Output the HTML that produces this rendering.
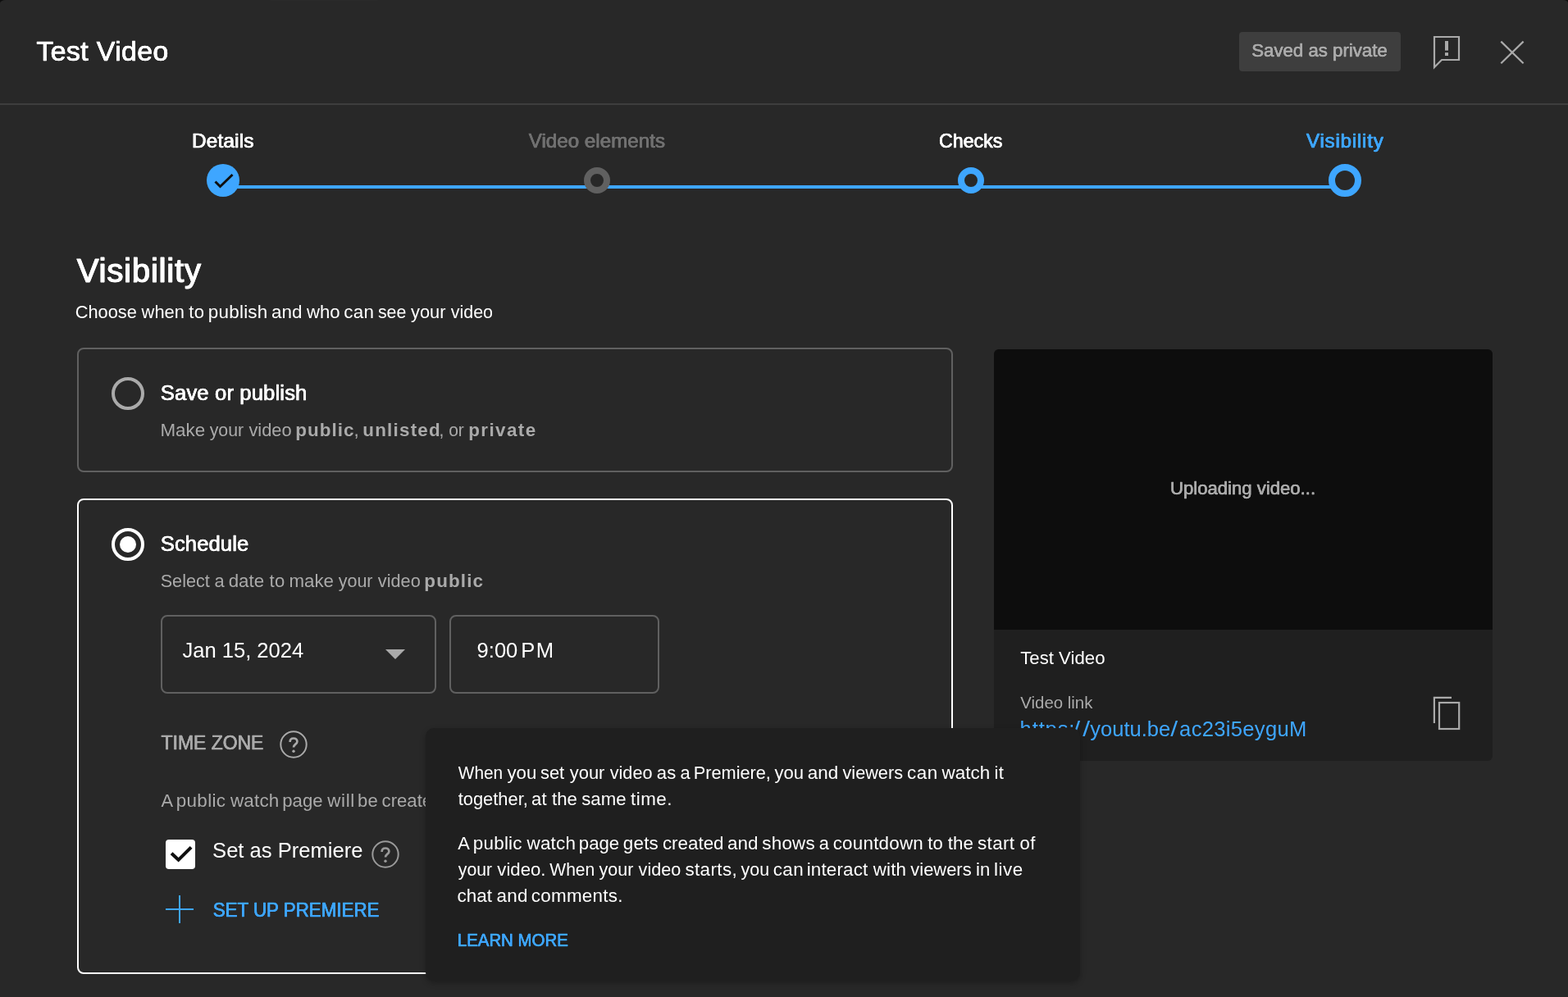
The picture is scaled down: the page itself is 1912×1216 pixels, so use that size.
<!DOCTYPE html>
<html lang="en">
<head>
<meta charset="utf-8">
<title>Test Video</title>
<style>
html,body{margin:0;padding:0;background:#0f0f0f;}
body{width:1912px;height:1216px;position:relative;overflow:hidden;font-family:"Liberation Sans",sans-serif;-webkit-font-smoothing:antialiased;}
.dialog{position:absolute;left:0;top:0;width:1912px;height:1216px;background:#282828;border-radius:7px 6px 0 0 / 4px 3.5px 0 0;}
.layer{position:absolute;left:0;top:0;width:1912px;height:1216px;will-change:transform;}
.abs,.t,svg{position:absolute;}
.t{white-space:nowrap;line-height:1;margin:0;padding:0;font-weight:400;transform-origin:0 0;}
.grp{margin:0;padding:0;height:0;font-size:0;line-height:0;}
.hline{left:0;top:126px;width:1912px;height:2px;background:#3e3e3e;}
.badge{left:1511px;top:39px;width:197px;height:48px;background:#3e3e3e;border-radius:4px;}
.stepline{left:272px;top:226px;width:1368px;height:4px;background:#3ea6ff;}
.dot{border-radius:50%;box-sizing:border-box;background:#282828;}
.card{box-sizing:border-box;border:2px solid #606060;border-radius:8px;}
.radio{box-sizing:border-box;width:40px;height:40px;border-radius:50%;border:4px solid #aaaaaa;}
.field{box-sizing:border-box;border:2px solid #606060;border-radius:8px;height:96px;top:750px;}
.panel{left:1212px;top:426px;width:608px;height:502px;background:#1f1f1f;border-radius:6px;overflow:hidden;}
.video{left:0;top:0;width:608px;height:342px;background:#0d0d0d;}
.tip{left:519px;top:888px;width:798px;height:308px;background:#1f1f1f;border-radius:10px;box-shadow:0 3px 7px rgba(0,0,0,.28);z-index:4;}
#title{left:44.4px;top:46px;font-size:33.8px;color:#ffffff;letter-spacing:0.402px;-webkit-text-stroke:0.51px #ffffff;text-shadow:0.34px 0 0 #ffffff,-0.34px 0 0 #ffffff;}
#saved{left:1526px;top:51px;font-size:22.4px;color:#aaaaaa;-webkit-text-stroke:0.34px #aaaaaa;text-shadow:0.22px 0 0 #aaaaaa,-0.22px 0 0 #aaaaaa;transform:translateX(0.2px) scaleX(0.9927);}
#s1{left:234.0px;top:160px;font-size:24.3px;color:#ffffff;letter-spacing:0.200px;-webkit-text-stroke:0.47px #ffffff;text-shadow:0.32px 0 0 #ffffff,-0.32px 0 0 #ffffff;}
#s2{left:644px;top:160px;font-size:24.3px;color:#717171;-webkit-text-stroke:0.47px #717171;text-shadow:0.32px 0 0 #717171,-0.32px 0 0 #717171;transform:translateX(0.7px) scaleX(0.9956);}
#s3{left:1145px;top:160px;font-size:24.3px;color:#ffffff;-webkit-text-stroke:0.47px #ffffff;text-shadow:0.32px 0 0 #ffffff,-0.32px 0 0 #ffffff;transform:scaleX(0.9548);}
#s4{left:1592.9px;top:160px;font-size:24.3px;color:#3ea6ff;letter-spacing:0.731px;-webkit-text-stroke:0.47px #3ea6ff;text-shadow:0.32px 0 0 #3ea6ff,-0.32px 0 0 #3ea6ff;}
#h1{left:93.8px;top:310px;font-size:40px;color:#ffffff;letter-spacing:0.826px;-webkit-text-stroke:0.9px #ffffff;text-shadow:0.6px 0 0 #ffffff,-0.6px 0 0 #ffffff;}
#c1t{left:195.8px;top:467px;font-size:25.6px;color:#ffffff;letter-spacing:0.152px;-webkit-text-stroke:0.38px #ffffff;text-shadow:0.26px 0 0 #ffffff,-0.26px 0 0 #ffffff;}
#c1db{left:360.3px;top:514px;font-size:22.4px;color:#aaaaaa;letter-spacing:1.033px;font-weight:700;}
#c1dc{left:431.6px;top:514px;font-size:22.4px;color:#aaaaaa;}
#c1dd{left:442.3px;top:514px;font-size:22.4px;color:#aaaaaa;letter-spacing:1.225px;font-weight:700;}
#c1de{left:535px;top:514px;font-size:22.4px;color:#aaaaaa;transform:translateX(0.5px) scaleX(0.9376);}
#c1df{left:571.2px;top:514px;font-size:22.4px;color:#aaaaaa;letter-spacing:1.432px;font-weight:700;}
#c2t{left:195.8px;top:651px;font-size:25.6px;color:#ffffff;letter-spacing:0.099px;-webkit-text-stroke:0.38px #ffffff;text-shadow:0.26px 0 0 #ffffff,-0.26px 0 0 #ffffff;}
#c2db{left:517.3px;top:698px;font-size:22.4px;color:#aaaaaa;letter-spacing:1.168px;font-weight:700;}
#date{left:222px;top:781px;font-size:25.6px;color:#ffffff;transform:translateX(0.4px) scaleX(0.9990);}
#timea{left:581px;top:781px;font-size:25.6px;color:#ffffff;transform:translateX(0.6px) scaleX(0.9981);}
#timeb{left:635.2px;top:781px;font-size:25.6px;color:#ffffff;letter-spacing:1.586px;}
#tz{left:196px;top:894px;font-size:24.8px;color:#aaaaaa;-webkit-text-stroke:0.48px #aaaaaa;text-shadow:0.32px 0 0 #aaaaaa,-0.32px 0 0 #aaaaaa;transform:translateX(0.6px) scaleX(0.9238);}
#prem{left:259px;top:1025px;font-size:25.6px;color:#ffffff;transform:translateX(0.1px) scaleX(0.9990);}
#setup{left:259px;top:1098px;font-size:24.8px;color:#3ea6ff;-webkit-text-stroke:0.48px #3ea6ff;text-shadow:0.32px 0 0 #3ea6ff,-0.32px 0 0 #3ea6ff;transform:translateX(0.7px) scaleX(0.9009);}
#upl{left:1427px;top:585px;font-size:22.4px;color:#aaaaaa;-webkit-text-stroke:0.34px #aaaaaa;text-shadow:0.22px 0 0 #aaaaaa,-0.22px 0 0 #aaaaaa;transform:scaleX(0.9879);}
#pt{left:1244px;top:792px;font-size:22.4px;color:#ffffff;transform:translateX(0.2px) scaleX(0.9921);}
#vl{left:1244px;top:847px;font-size:20.8px;color:#aaaaaa;transform:translateX(0.3px) scaleX(0.9813);}
#linka{left:1243.6px;top:877px;font-size:25.6px;color:#3ea6ff;letter-spacing:0.845px;}
#linkb{left:1308px;top:877px;font-size:25.6px;color:#3ea6ff;letter-spacing:2.469px;transform:translateX(0.2px) scaleX(1.2500);}
#linkd{left:1329px;top:877px;font-size:25.6px;color:#3ea6ff;transform:translateX(0.3px) scaleX(0.9971);}
#linke{left:1427px;top:877px;font-size:25.6px;color:#3ea6ff;transform:translateX(0.2px) scaleX(1.2500);}
#linkc{left:1438.1px;top:877px;font-size:25.6px;color:#3ea6ff;letter-spacing:0.300px;}
#lm{left:557px;top:1136px;font-size:22.2px;color:#3ea6ff;-webkit-text-stroke:0.4px #3ea6ff;text-shadow:0.27px 0 0 #3ea6ff,-0.27px 0 0 #3ea6ff;z-index:5;transform:translateX(0.8px) scaleX(0.9199);}
#sub0{left:91px;top:370px;font-size:22.4px;color:#ffffff;transform:translateX(0.7px) scaleX(0.9731);}
#sub1{left:172px;top:370px;font-size:22.4px;color:#ffffff;transform:translateX(0.6px) scaleX(0.9769);}
#sub2{left:230px;top:370px;font-size:22.4px;color:#ffffff;letter-spacing:0.300px;transform:translateX(0.3px) scaleX(0.9850);}
#sub3{left:253.8px;top:370px;font-size:22.4px;color:#ffffff;letter-spacing:0.252px;}
#sub4{left:330.9px;top:370px;font-size:22.4px;color:#ffffff;letter-spacing:0.124px;}
#sub5{left:374px;top:370px;font-size:22.4px;color:#ffffff;transform:scaleX(0.9874);}
#sub6{left:419.3px;top:370px;font-size:22.4px;color:#ffffff;letter-spacing:0.327px;}
#sub7{left:460px;top:370px;font-size:22.4px;color:#ffffff;transform:translateX(0.9px) scaleX(0.9518);}
#sub8{left:501px;top:370px;font-size:22.4px;color:#ffffff;transform:scaleX(0.9730);}
#sub9{left:549px;top:370px;font-size:22.4px;color:#ffffff;transform:translateX(0.7px) scaleX(0.9594);}
#c1da0{left:195px;top:514px;font-size:22.4px;color:#aaaaaa;transform:translateX(0.4px) scaleX(0.9992);}
#c1da1{left:255px;top:514px;font-size:22.4px;color:#aaaaaa;transform:translateX(0.7px) scaleX(0.9508);}
#c1da2{left:303px;top:514px;font-size:22.4px;color:#aaaaaa;transform:translateX(0.4px) scaleX(0.9770);}
#c2da0{left:195px;top:698px;font-size:22.4px;color:#aaaaaa;transform:translateX(0.7px) scaleX(0.9658);}
#c2da1{left:261px;top:698px;font-size:22.4px;color:#aaaaaa;transform:translateX(0.5px) scaleX(0.9750);}
#c2da2{left:278px;top:698px;font-size:22.4px;color:#aaaaaa;transform:translateX(0.7px) scaleX(0.9955);}
#c2da3{left:328px;top:698px;font-size:22.4px;color:#aaaaaa;letter-spacing:0.300px;transform:translateX(0.5px) scaleX(0.9850);}
#c2da4{left:352px;top:698px;font-size:22.4px;color:#aaaaaa;transform:translateX(0.4px) scaleX(0.9965);}
#c2da5{left:412px;top:698px;font-size:22.4px;color:#aaaaaa;transform:translateX(0.7px) scaleX(0.9602);}
#c2da6{left:460px;top:698px;font-size:22.4px;color:#aaaaaa;transform:translateX(0.8px) scaleX(0.9711);}
#pw0{left:196px;top:966px;font-size:22.4px;color:#aaaaaa;transform:translateX(0.4px) scaleX(0.9750);}
#pw1{left:214.8px;top:966px;font-size:22.4px;color:#aaaaaa;letter-spacing:0.324px;}
#pw2{left:281.0px;top:966px;font-size:22.4px;color:#aaaaaa;letter-spacing:0.180px;}
#pw3{left:344px;top:966px;font-size:22.4px;color:#aaaaaa;transform:translateX(0.3px) scaleX(0.9886);}
#pw4{left:399.3px;top:966px;font-size:22.4px;color:#aaaaaa;letter-spacing:0.632px;}
#pw5{left:435px;top:966px;font-size:22.4px;color:#aaaaaa;letter-spacing:0.300px;transform:translateX(0.9px) scaleX(0.9850);}
#pw6{left:465px;top:966px;font-size:22.4px;color:#aaaaaa;transform:translateX(0.6px) scaleX(0.9880);}
#tt10{left:558px;top:932px;font-size:22.4px;color:#ffffff;z-index:5;transform:translateX(0.8px) scaleX(0.9286);}
#tt11{left:618px;top:932px;font-size:22.4px;color:#ffffff;z-index:5;transform:translateX(0.5px) scaleX(0.9898);}
#tt12{left:659px;top:932px;font-size:22.4px;color:#ffffff;z-index:5;transform:scaleX(0.9773);}
#tt13{left:694px;top:932px;font-size:22.4px;color:#ffffff;z-index:5;transform:translateX(0.8px) scaleX(0.9779);}
#tt14{left:743px;top:932px;font-size:22.4px;color:#ffffff;z-index:5;transform:translateX(0.7px) scaleX(0.9674);}
#tt15{left:800px;top:932px;font-size:22.4px;color:#ffffff;letter-spacing:0.300px;z-index:5;transform:translateX(0.7px) scaleX(0.9850);}
#tt16{left:829px;top:932px;font-size:22.4px;color:#ffffff;z-index:5;transform:translateX(0.6px) scaleX(0.9750);}
#tt17{left:845px;top:932px;font-size:22.4px;color:#ffffff;z-index:5;transform:translateX(0.7px) scaleX(0.9707);}
#tt18{left:944px;top:932px;font-size:22.4px;color:#ffffff;z-index:5;transform:translateX(0.6px) scaleX(0.9840);}
#tt19{left:984.7px;top:932px;font-size:22.4px;color:#ffffff;letter-spacing:0.107px;z-index:5;}
#tt110{left:1027px;top:932px;font-size:22.4px;color:#ffffff;z-index:5;transform:translateX(0.5px) scaleX(0.9683);}
#tt111{left:1106.1px;top:932px;font-size:22.4px;color:#ffffff;letter-spacing:0.468px;z-index:5;}
#tt112{left:1148.4px;top:932px;font-size:22.4px;color:#ffffff;letter-spacing:0.110px;z-index:5;}
#tt113{left:1212px;top:932px;font-size:22.4px;color:#ffffff;letter-spacing:0.300px;z-index:5;transform:translateX(0.6px) scaleX(0.9850);}
#tt20{left:558px;top:964px;font-size:22.4px;color:#ffffff;z-index:5;transform:translateX(0.7px) scaleX(0.9765);}
#tt21{left:647px;top:964px;font-size:22.4px;color:#ffffff;letter-spacing:0.300px;z-index:5;transform:translateX(0.9px) scaleX(0.9850);}
#tt22{left:673px;top:964px;font-size:22.4px;color:#ffffff;z-index:5;transform:scaleX(0.9895);}
#tt23{left:709px;top:964px;font-size:22.4px;color:#ffffff;z-index:5;transform:translateX(0.2px) scaleX(0.9925);}
#tt24{left:769.1px;top:964px;font-size:22.4px;color:#ffffff;letter-spacing:0.454px;z-index:5;}
#tt30{left:558px;top:1018px;font-size:22.4px;color:#ffffff;z-index:5;transform:translateX(0.3px) scaleX(0.9750);}
#tt31{left:576.8px;top:1018px;font-size:22.4px;color:#ffffff;letter-spacing:0.245px;z-index:5;}
#tt32{left:642.6px;top:1018px;font-size:22.4px;color:#ffffff;letter-spacing:0.191px;z-index:5;}
#tt33{left:705px;top:1018px;font-size:22.4px;color:#ffffff;z-index:5;transform:translateX(0.8px) scaleX(0.9907);}
#tt34{left:759.8px;top:1018px;font-size:22.4px;color:#ffffff;letter-spacing:0.218px;z-index:5;}
#tt35{left:807px;top:1018px;font-size:22.4px;color:#ffffff;z-index:5;transform:translateX(0.9px) scaleX(0.9991);}
#tt36{left:887.0px;top:1018px;font-size:22.4px;color:#ffffff;letter-spacing:0.076px;z-index:5;}
#tt37{left:929.3px;top:1018px;font-size:22.4px;color:#ffffff;letter-spacing:0.235px;z-index:5;}
#tt38{left:998px;top:1018px;font-size:22.4px;color:#ffffff;z-index:5;transform:translateX(0.8px) scaleX(0.9750);}
#tt39{left:1015.7px;top:1018px;font-size:22.4px;color:#ffffff;letter-spacing:0.223px;z-index:5;}
#tt310{left:1131px;top:1018px;font-size:22.4px;color:#ffffff;letter-spacing:0.300px;z-index:5;transform:translateX(0.2px) scaleX(0.9850);}
#tt311{left:1155px;top:1018px;font-size:22.4px;color:#ffffff;z-index:5;transform:translateX(0.8px) scaleX(0.9974);}
#tt312{left:1192.0px;top:1018px;font-size:22.4px;color:#ffffff;letter-spacing:0.369px;z-index:5;}
#tt313{left:1243px;top:1018px;font-size:22.4px;color:#ffffff;letter-spacing:0.300px;z-index:5;transform:translateX(0.6px) scaleX(0.9850);}
#tt40{left:558px;top:1050px;font-size:22.4px;color:#ffffff;z-index:5;transform:translateX(0.8px) scaleX(0.9462);}
#tt41{left:606px;top:1050px;font-size:22.4px;color:#ffffff;z-index:5;transform:translateX(0.3px) scaleX(0.9901);}
#tt42{left:670px;top:1050px;font-size:22.4px;color:#ffffff;z-index:5;transform:translateX(0.3px) scaleX(0.9392);}
#tt43{left:730px;top:1050px;font-size:22.4px;color:#ffffff;z-index:5;transform:translateX(0.6px) scaleX(0.9573);}
#tt44{left:778px;top:1050px;font-size:22.4px;color:#ffffff;z-index:5;transform:translateX(0.6px) scaleX(0.9652);}
#tt45{left:835.4px;top:1050px;font-size:22.4px;color:#ffffff;letter-spacing:0.408px;z-index:5;}
#tt46{left:903px;top:1050px;font-size:22.4px;color:#ffffff;z-index:5;transform:translateX(0.6px) scaleX(0.9559);}
#tt47{left:942.7px;top:1050px;font-size:22.4px;color:#ffffff;letter-spacing:0.456px;z-index:5;}
#tt48{left:983.7px;top:1050px;font-size:22.4px;color:#ffffff;letter-spacing:0.159px;z-index:5;}
#tt49{left:1064.7px;top:1050px;font-size:22.4px;color:#ffffff;letter-spacing:0.174px;z-index:5;}
#tt410{left:1110px;top:1050px;font-size:22.4px;color:#ffffff;z-index:5;transform:translateX(0.3px) scaleX(0.9795);}
#tt411{left:1189px;top:1050px;font-size:22.4px;color:#ffffff;letter-spacing:0.300px;z-index:5;transform:translateX(0.9px) scaleX(0.9850);}
#tt412{left:1212.0px;top:1050px;font-size:22.4px;color:#ffffff;letter-spacing:0.512px;z-index:5;}
#tt50{left:557.5px;top:1082px;font-size:22.4px;color:#ffffff;letter-spacing:0.012px;z-index:5;}
#tt51{left:605.6px;top:1082px;font-size:22.4px;color:#ffffff;letter-spacing:0.305px;z-index:5;}
#tt52{left:647.8px;top:1082px;font-size:22.4px;color:#ffffff;letter-spacing:0.261px;z-index:5;}

</style>
</head>
<body>
<div class="dialog"></div>
<div class="layer">

<header>
  <h1 class="t" id="title">Test Video</h1>
  <div class="abs badge"></div>
  <span class="t" id="saved">Saved as private</span>
  <svg style="left:1744px;top:40px" width="48" height="48" viewBox="0 0 48 48" fill="none" stroke="#aaaaaa" stroke-width="2.2">
    <path d="M5 5 H35 V33 H14 L5 42 Z" stroke-linejoin="miter"/>
    <rect x="18" y="10" width="4" height="11.6" fill="#aaaaaa" stroke="none"/>
    <rect x="18" y="24.1" width="4" height="3.9" fill="#aaaaaa" stroke="none"/>
  </svg>
  <svg style="left:1824px;top:44px" width="40" height="40" viewBox="0 0 40 40" fill="none" stroke="#aaaaaa" stroke-width="2.2">
    <path d="M6.3 6.6 L33.6 33.2 M33.6 6.6 L6.3 33.2"/>
  </svg>
  <div class="abs hline"></div>
  <div class="abs" style="left:330px;top:0;width:130px;height:1px;background:#2b2b2b;"></div>
</header>

<nav>
  <span class="t" id="s1">Details</span>
  <span class="t" id="s2">Video elements</span>
  <span class="t" id="s3">Checks</span>
  <span class="t" id="s4">Visibility</span>
  <div class="abs stepline"></div>
  <div class="abs dot" style="left:252px;top:200px;width:40px;height:40px;background:#3ea6ff;"></div>
  <svg style="left:252px;top:200px" width="40" height="40" viewBox="0 0 40 40" fill="none" stroke="#0f0f0f" stroke-width="3">
    <path d="M10.5 21.5 L16.5 27.5 L31.5 13"/>
  </svg>
  <div class="abs dot" style="left:712px;top:204px;width:32px;height:32px;border:8px solid #606060;"></div>
  <div class="abs dot" style="left:1168px;top:204px;width:32px;height:32px;border:8px solid #3ea6ff;"></div>
  <div class="abs dot" style="left:1620px;top:200px;width:40px;height:40px;border:8px solid #3ea6ff;"></div>
</nav>

<main>
  <h2 class="t" id="h1">Visibility</h2>
  <p class="grp"><span class="t" id="sub0">Choose</span> <span class="t" id="sub1">when</span> <span class="t" id="sub2">to</span> <span class="t" id="sub3">publish</span> <span class="t" id="sub4">and</span> <span class="t" id="sub5">who</span> <span class="t" id="sub6">can</span> <span class="t" id="sub7">see</span> <span class="t" id="sub8">your</span> <span class="t" id="sub9">video</span></p>

  <section class="abs card" style="left:94px;top:424px;width:1068px;height:152px;"></section>
  <div class="abs radio" style="left:136px;top:460px;"></div>
  <span class="t" id="c1t">Save or publish</span>
  <p class="grp"><span class="t" id="c1da0">Make</span> <span class="t" id="c1da1">your</span> <span class="t" id="c1da2">video</span> <b class="t" id="c1db">public</b><span class="t" id="c1dc">,</span> <b class="t" id="c1dd">unlisted</b><span class="t" id="c1de">, or</span> <b class="t" id="c1df">private</b></p>

  <section class="abs card" style="left:94px;top:608px;width:1068px;height:580px;border-color:#ffffff;"></section>
  <div class="abs radio" style="left:136px;top:644px;border-color:#ffffff;"></div>
  <div class="abs" style="left:146px;top:654px;width:20px;height:20px;border-radius:50%;background:#ffffff;"></div>
  <span class="t" id="c2t">Schedule</span>
  <p class="grp"><span class="t" id="c2da0">Select</span> <span class="t" id="c2da1">a</span> <span class="t" id="c2da2">date</span> <span class="t" id="c2da3">to</span> <span class="t" id="c2da4">make</span> <span class="t" id="c2da5">your</span> <span class="t" id="c2da6">video</span> <b class="t" id="c2db">public</b></p>

  <div class="abs field" style="left:196px;width:336px;"></div>
  <span class="t" id="date">Jan 15, 2024</span>
  <svg style="left:470px;top:792px" width="24" height="12" viewBox="0 0 24 12"><path d="M0 0 H24 L12 12 Z" fill="#aaaaaa"/></svg>
  <div class="abs field" style="left:548px;width:256px;"></div>
  <span class="grp"><span class="t" id="timea">9:00</span> <span class="t" id="timeb">PM</span></span>

  <span class="t" id="tz">TIME ZONE</span>
  <svg style="left:340px;top:890px" width="36" height="36" viewBox="0 0 36 36" fill="none" stroke="#aaaaaa" stroke-width="2">
    <circle cx="18" cy="18" r="15.7"/>
    <path d="M13.6 14.9 C13.6 12.1 15.5 10.5 18 10.5 C20.5 10.5 22.4 12.1 22.4 14.5 C22.4 17.5 18 17.9 18 21.5" stroke-width="2.7"/>
    <circle cx="18" cy="26.2" r="1.7" fill="#aaaaaa" stroke="none"/>
  </svg>
  <p class="grp"><span class="t" id="pw0">A</span> <span class="t" id="pw1">public</span> <span class="t" id="pw2">watch</span> <span class="t" id="pw3">page</span> <span class="t" id="pw4">will</span> <span class="t" id="pw5">be</span> <span class="t" id="pw6">created</span></p>

  <div class="abs" style="left:202px;top:1024px;width:36px;height:36px;background:#ffffff;border-radius:4px;"></div>
  <svg style="left:202px;top:1024px" width="36" height="36" viewBox="0 0 36 36" fill="none" stroke="#0f0f0f" stroke-width="4">
    <path d="M7.1 16.8 L15.6 24.8 L31.1 9.3"/>
  </svg>
  <span class="t" id="prem">Set as Premiere</span>
  <svg style="left:452px;top:1024px" width="36" height="36" viewBox="0 0 36 36" fill="none" stroke="#9a9a9a" stroke-width="2">
    <circle cx="18" cy="18" r="15.7"/>
    <path d="M13.6 14.9 C13.6 12.1 15.5 10.5 18 10.5 C20.5 10.5 22.4 12.1 22.4 14.5 C22.4 17.5 18 17.9 18 21.5" stroke-width="2.7"/>
    <circle cx="18" cy="26.2" r="1.7" fill="#9a9a9a" stroke="none"/>
  </svg>

  <svg style="left:201px;top:1091px" width="36" height="36" viewBox="0 0 36 36" fill="none" stroke="#3ea6ff" stroke-width="2">
    <path d="M18 1 V35 M1 18 H35"/>
  </svg>
  <span class="t" id="setup">SET UP PREMIERE</span>
</main>

<aside>
  <div class="abs panel"><div class="abs video"></div></div>
  <span class="t" id="upl">Uploading video...</span>
  <span class="t" id="pt">Test Video</span>
  <span class="t" id="vl">Video link</span>
  <a class="grp"><span class="t" id="linka">https:</span><span class="t" id="linkb">//</span><span class="t" id="linkd">youtu.be</span><span class="t" id="linke">/</span><span class="t" id="linkc">ac23i5eyguM</span></a>
  <svg style="left:1744px;top:846px" width="40" height="48" viewBox="0 0 40 48" fill="none" stroke="#aaaaaa" stroke-width="2.2">
    <path d="M4.9 36 V4.9 H26"/>
    <rect x="11" y="11" width="24.2" height="32"/>
  </svg>
</aside>

<div class="abs tip" role="tooltip"></div>
<p class="grp"><span class="t" id="tt10">When</span> <span class="t" id="tt11">you</span> <span class="t" id="tt12">set</span> <span class="t" id="tt13">your</span> <span class="t" id="tt14">video</span> <span class="t" id="tt15">as</span> <span class="t" id="tt16">a</span> <span class="t" id="tt17">Premiere,</span> <span class="t" id="tt18">you</span> <span class="t" id="tt19">and</span> <span class="t" id="tt110">viewers</span> <span class="t" id="tt111">can</span> <span class="t" id="tt112">watch</span> <span class="t" id="tt113">it</span></p>
<p class="grp"><span class="t" id="tt20">together,</span> <span class="t" id="tt21">at</span> <span class="t" id="tt22">the</span> <span class="t" id="tt23">same</span> <span class="t" id="tt24">time.</span></p>
<p class="grp"><span class="t" id="tt30">A</span> <span class="t" id="tt31">public</span> <span class="t" id="tt32">watch</span> <span class="t" id="tt33">page</span> <span class="t" id="tt34">gets</span> <span class="t" id="tt35">created</span> <span class="t" id="tt36">and</span> <span class="t" id="tt37">shows</span> <span class="t" id="tt38">a</span> <span class="t" id="tt39">countdown</span> <span class="t" id="tt310">to</span> <span class="t" id="tt311">the</span> <span class="t" id="tt312">start</span> <span class="t" id="tt313">of</span></p>
<p class="grp"><span class="t" id="tt40">your</span> <span class="t" id="tt41">video.</span> <span class="t" id="tt42">When</span> <span class="t" id="tt43">your</span> <span class="t" id="tt44">video</span> <span class="t" id="tt45">starts,</span> <span class="t" id="tt46">you</span> <span class="t" id="tt47">can</span> <span class="t" id="tt48">interact</span> <span class="t" id="tt49">with</span> <span class="t" id="tt410">viewers</span> <span class="t" id="tt411">in</span> <span class="t" id="tt412">live</span></p>
<p class="grp"><span class="t" id="tt50">chat</span> <span class="t" id="tt51">and</span> <span class="t" id="tt52">comments.</span></p>
<a class="t" id="lm">LEARN MORE</a>

</div>
</body>
</html>
